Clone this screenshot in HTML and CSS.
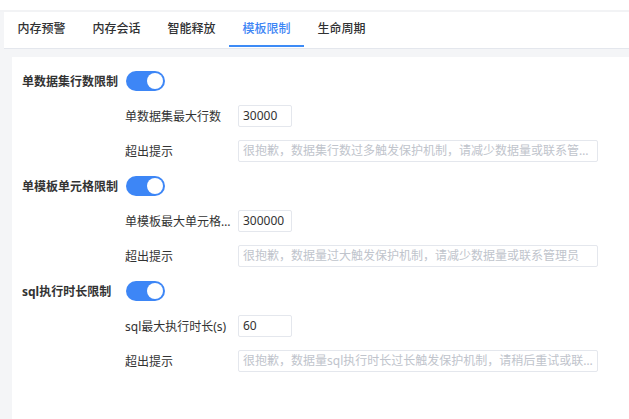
FILE: index.html
```html
<!DOCTYPE html>
<html lang="zh-CN">
<head>
<meta charset="utf-8">
<title>模板限制</title>
<link rel="stylesheet" href="styles.css">
</head>
<body>
<div class="topbar"></div>
<div class="main">
  <div class="tabs">
    <div class="tab">内存预警</div>
    <div class="tab">内存会话</div>
    <div class="tab">智能释放</div>
    <div class="tab active">模板限制</div>
    <div class="tab">生命周期</div>
  </div>
  <div class="content">
    <div class="panel">
      <div class="row head"><span class="head-label">单数据集行数限制</span><span class="switch"></span></div>
      <div class="row sub"><span class="sub-label">单数据集最大行数</span><input class="inp short" value="30000"></div>
      <div class="row sub"><span class="sub-label">超出提示</span><input class="inp long" placeholder="很抱歉，数据集行数过多触发保护机制，请减少数据量或联系管理员"></div>

      <div class="row head"><span class="head-label">单模板单元格限制</span><span class="switch"></span></div>
      <div class="row sub"><span class="sub-label">单模板最大单元格数</span><input class="inp short" value="300000"></div>
      <div class="row sub"><span class="sub-label">超出提示</span><input class="inp long" placeholder="很抱歉，数据量过大触发保护机制，请减少数据量或联系管理员"></div>

      <div class="row head"><span class="head-label">sql执行时长限制</span><span class="switch"></span></div>
      <div class="row sub"><span class="sub-label">sql最大执行时长(s)</span><input class="inp short" value="60"></div>
      <div class="row sub"><span class="sub-label">超出提示</span><input class="inp long" placeholder="很抱歉，数据量sql执行时长过长触发保护机制，请稍后重试或联系管理员"></div>
    </div>
  </div>
</div>
</body>
</html>
```
FILE: styles.css
```css
html, body {
  margin: 0;
  height: 100%;
}
body {
  font-family: "Noto Sans", "Noto Sans CJK SC", sans-serif;
  font-size: 12px;
  color: #333;
  background: #fff;
  display: flex;
  flex-direction: column;
}
.topbar {
  height: 10px;
  border-bottom: 2px solid #f2f3f5;
  flex: none;
}
.main {
  flex: 1;
  background: #f4f5f7;
  padding-left: 4px;
  display: flex;
  flex-direction: column;
}
.tabs {
  background: #fff;
  height: 36px;
  border-bottom: 1px solid #e4e7ed;
  display: flex;
  flex: none;
}
.tab {
  width: 75px;
  height: 35px;
  box-sizing: border-box;
  border-bottom: 2px solid transparent;
  text-align: center;
  line-height: 33px;
  font-weight: 500;
  color: #303133;
}
.tab.active {
  color: #3d85f5;
  border-bottom-color: #3d8bf6;
}
.content {
  flex: 1;
  padding: 8px 0 0 8px;
  display: flex;
}
.panel {
  flex: 1;
  background: #fff;
  padding: 6px 0 0 10px;
}
.row {
  height: 35px;
  display: flex;
  align-items: center;
}
.head-label {
  width: 104px;
  font-weight: bold;
  color: #333;
}
.switch {
  width: 39px;
  height: 20px;
  border-radius: 10px;
  background: #3d86f6;
  position: relative;
}
.switch::after {
  content: "";
  position: absolute;
  top: 2px;
  right: 2px;
  width: 16px;
  height: 16px;
  border-radius: 50%;
  background: #fff;
}
.sub {
  padding-left: 103px;
}
.sub-label {
  width: 106px;
  padding-right: 7px;
  white-space: nowrap;
  overflow: hidden;
  text-overflow: ellipsis;
  color: #333;
}
.inp {
  height: 22px;
  box-sizing: border-box;
  border: 1px solid #e4e7ed;
  border-radius: 2px;
  padding: 0 4px;
  font: inherit;
  color: #333;
  outline: none;
  text-overflow: ellipsis;
  background: #fff;
}
.short {
  width: 54px;
}
.long {
  width: 360px;
}
.inp::placeholder {
  color: #c0c4cc;
}
```
